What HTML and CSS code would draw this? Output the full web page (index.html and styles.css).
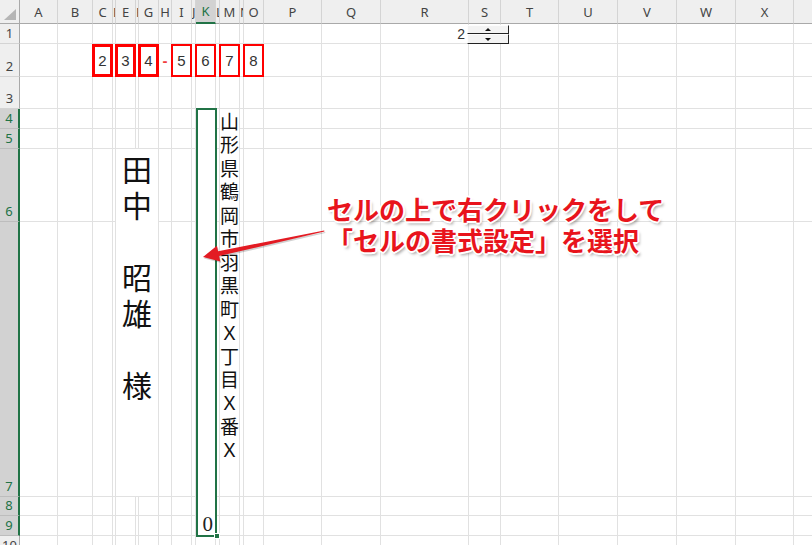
FILE: index.html
```html
<!DOCTYPE html>
<html lang="ja">
<head>
<meta charset="utf-8">
<title>Excel - 宛名</title>
<link rel="stylesheet" href="styles.css">
</head>
<body>
<table class="sheet">
<colgroup>
<col class="w20"><col class="w38"><col class="w35"><col class="w20"><col class="w3"><col class="w20"><col class="w3"><col class="w20"><col class="w13"><col class="w20"><col class="w4"><col class="w20"><col class="w4"><col class="w20"><col class="w4"><col class="w20"><col class="w58"><col class="w59"><col class="w88"><col class="w32"><col class="w58"><col class="w59"><col class="w59"><col class="w59"><col class="w58"><col class="w58">
</colgroup>
<tr class="colhd h24">
<th class="corner"><span class="tri"></span></th><th>A</th><th>B</th><th>C</th><th>D</th><th>E</th><th>F</th><th>G</th><th>H</th><th>I</th><th>J</th><th class="act">K</th><th>L</th><th>M</th><th>N</th><th>O</th><th>P</th><th>Q</th><th>R</th><th>S</th><th>T</th><th>U</th><th>V</th><th>W</th><th>X</th><th>Y</th>
</tr>
<tr class="h20">
<th class="rowhd">1</th><td></td><td></td><td></td><td></td><td></td><td></td><td></td><td></td><td></td><td></td><td></td><td></td><td></td><td></td><td></td><td></td><td></td><td class="num">2</td><td></td><td></td><td></td><td></td><td></td><td></td><td></td>
</tr>
<tr class="h33">
<th class="rowhd">2</th><td></td><td></td><td><div class="box">2</div></td><td></td><td><div class="box">3</div></td><td></td><td><div class="box">4</div></td><td class="dash">-</td><td><div class="box thin">5</div></td><td></td><td><div class="box thin">6</div></td><td></td><td><div class="box thin">7</div></td><td></td><td><div class="box thin">8</div></td><td></td><td></td><td></td><td></td><td></td><td></td><td></td><td></td><td></td><td></td>
</tr>
<tr class="h32">
<th class="rowhd">3</th><td></td><td></td><td></td><td></td><td></td><td></td><td></td><td></td><td></td><td></td><td></td><td></td><td></td><td></td><td></td><td></td><td></td><td></td><td></td><td></td><td></td><td></td><td></td><td></td><td></td>
</tr>
<tr class="h20 sel-row">
<th class="rowhd">4</th><td></td><td></td><td></td><td></td><td></td><td></td><td></td><td></td><td></td><td></td><td class="kcell" rowspan="6">0</td><td></td><td class="addr" rowspan="4"><div class="vaddr">山形県鶴岡市羽黒町Ｘ丁目Ｘ番Ｘ</div></td><td></td><td></td><td></td><td></td><td></td><td></td><td></td><td></td><td></td><td></td><td></td><td></td>
</tr>
<tr class="h20 sel-row">
<th class="rowhd">5</th><td></td><td></td><td></td><td></td><td></td><td></td><td></td><td></td><td></td><td></td><td></td><td></td><td></td><td></td><td></td><td></td><td></td><td></td><td></td><td></td><td></td><td></td><td></td>
</tr>
<tr class="h73 sel-row">
<th class="rowhd">6</th><td></td><td></td><td></td><td></td><td class="name" colspan="3" rowspan="2"><div class="vname">田中　昭雄　様</div></td><td></td><td></td><td></td><td></td><td></td><td></td><td></td><td></td><td></td><td></td><td></td><td></td><td></td><td></td><td></td><td></td>
</tr>
<tr class="h275 sel-row">
<th class="rowhd">7</th><td></td><td></td><td></td><td></td><td></td><td></td><td></td><td></td><td></td><td></td><td></td><td></td><td></td><td></td><td></td><td></td><td></td><td></td><td></td><td></td>
</tr>
<tr class="h19 sel-row">
<th class="rowhd">8</th><td></td><td></td><td></td><td></td><td></td><td></td><td></td><td></td><td></td><td></td><td></td><td></td><td></td><td></td><td></td><td></td><td></td><td></td><td></td><td></td><td></td><td></td><td></td><td></td>
</tr>
<tr class="h20 sel-row">
<th class="rowhd">9</th><td></td><td></td><td></td><td></td><td></td><td></td><td></td><td></td><td></td><td></td><td></td><td></td><td></td><td></td><td></td><td></td><td></td><td></td><td></td><td></td><td></td><td></td><td></td><td></td>
</tr>
<tr class="h20">
<th class="rowhd">10</th><td></td><td></td><td></td><td></td><td></td><td></td><td></td><td></td><td></td><td></td><td></td><td></td><td></td><td></td><td></td><td></td><td></td><td></td><td></td><td></td><td></td><td></td><td></td><td></td><td></td>
</tr>
</table>

<div class="spin">
  <div class="spin-btn up"></div>
  <div class="spin-btn down"></div>
</div>

<svg class="arrow" viewBox="0 0 812 545" width="812" height="545" aria-hidden="true">
  <polygon class="arrow-shadow" points="325.2,232.1 219.1,252.7 217.9,247.3 204,258.5 221.3,262.9 220.1,257.5 325.4,233.1"/>
  <polygon class="arrow-body" points="324.2,230.6 218.1,251.2 216.9,245.8 203,257 220.3,261.4 219.1,256.0 324.4,231.6"/>
</svg>

<div class="note">
  <div>セルの上で右クリックをして</div>
  <div>「セルの書式設定」を選択</div>
</div>
</body>
</html>
```
FILE: styles.css
```css
html, body {
  margin: 0;
  padding: 0;
  overflow: hidden;
  background: #fff;
}
body {
  width: 812px;
  height: 545px;
  position: relative;
  font-family: "Liberation Sans", "Noto Sans CJK JP", sans-serif;
}

/* ---------- sheet grid ---------- */
.sheet {
  border-collapse: separate;
  border-spacing: 0;
  table-layout: fixed;
  width: 852px;
}
.w20 { width: 20px; }
.w38 { width: 38px; }
.w35 { width: 35px; }
.w3 { width: 3px; }
.w4 { width: 4px; }
.w13 { width: 13px; }
.w32 { width: 32px; }
.w58 { width: 58px; }
.w59 { width: 59px; }
.w88 { width: 88px; }

.h24 { height: 24px; }
.h20 { height: 20px; }
.h19 { height: 19px; }
.h33 { height: 33px; }
.h32 { height: 32px; }
.h73 { height: 73px; }
.h275 { height: 275px; }

.sheet td {
  padding: 0;
  border-right: 1px solid #e1e1e1;
  border-bottom: 1px solid #e1e1e1;
  font-size: 14px;
  color: #333;
}
.sheet th {
  padding: 0;
  font-weight: normal;
  font-family: "Noto Sans", "Liberation Sans", sans-serif;
  font-size: 13px;
  color: #444;
  background: #efefef;
  overflow: hidden;
  white-space: nowrap;
}

/* column header */
.colhd th {
  border-right: 1px solid #d4d4d4;
  border-bottom: 1px solid #a9a9a9;
  text-align: center;
  vertical-align: middle;
}
.colhd th.act {
  background: #d2d2d2;
  color: #217346;
  border-bottom: 2px solid #217346;
}
.colhd th.corner {
  position: relative;
  border-right: 1px solid #a9a9a9;
}
.tri {
  position: absolute;
  right: 3px;
  bottom: 3px;
  width: 0;
  height: 0;
  border-left: 12px solid transparent;
  border-bottom: 11px solid #b5b5b5;
}

/* row header */
.sheet .rowhd {
  border-right: 1px solid #a9a9a9;
  border-bottom: 1px solid #d4d4d4;
  text-align: center;
  vertical-align: bottom;
  line-height: 17px;
  padding-bottom: 1px;
}
.sel-row .rowhd {
  background: #d2d2d2;
  color: #217346;
  border-right: 2px solid #217346;
  border-bottom-color: #bdbdbd;
}

/* cells */
.sheet td.num {
  text-align: right;
  padding-right: 3px;
  font-size: 14px;
  color: #333;
}
.box {
  height: 33px;
  margin: 0 -1px -1px;
  box-sizing: border-box;
  border: 3px solid #ff0000;
  display: flex;
  align-items: center;
  justify-content: center;
  font-size: 15px;
  color: #333;
}
.box.thin {
  border-width: 2px;
}
.sheet td.dash {
  text-align: center;
  color: #f03c3c;
  font-size: 15px;
  font-weight: bold;
}

.sheet td.name {
  vertical-align: top;
}
.vname {
  writing-mode: vertical-rl;
  font-family: "Noto Sans CJK JP", sans-serif;
  font-size: 30px;
  line-height: 30px;
  width: 30px;
  height: 260px;
  letter-spacing: 6px;
  margin: 6px auto 0;
  color: #111;
}

.sheet td.addr {
  vertical-align: top;
}
.vaddr {
  writing-mode: vertical-rl;
  font-family: "Noto Sans CJK JP", sans-serif;
  font-size: 19px;
  line-height: 19px;
  width: 19px;
  height: 370px;
  letter-spacing: 4.5px;
  margin: 3px 0 0;
  color: #111;
}

.sheet td.kcell {
  position: relative;
  vertical-align: bottom;
  text-align: right;
  padding-right: 2px;
  font-family: "Liberation Serif", serif;
  font-size: 21px;
  line-height: 21px;
  color: #222;
}
.kcell::before {
  content: "";
  position: absolute;
  left: 0;
  top: -1px;
  right: -2px;
  bottom: -2px;
  border: 2px solid #217346;
}
.kcell::after {
  content: "";
  position: absolute;
  right: -5px;
  bottom: -4px;
  width: 4px;
  height: 4px;
  background: #217346;
  border: 1px solid #fff;
}

/* ---------- spin button control ---------- */
.spin {
  position: absolute;
  left: 467px;
  top: 25px;
  width: 42px;
}
.spin-btn {
  box-sizing: border-box;
  height: 9px;
  background: #f3f3f3;
  border-top: 1px solid #fdfdfd;
  border-left: 1px solid #fdfdfd;
  border-right: 1px solid #222;
  border-bottom: 1px solid #222;
  display: flex;
  align-items: center;
  justify-content: center;
}
.spin-btn.down {
  height: 10px;
}
.up::before {
  content: "";
  border-left: 3px solid transparent;
  border-right: 3px solid transparent;
  border-bottom: 3px solid #111;
}
.down::before {
  content: "";
  border-left: 3px solid transparent;
  border-right: 3px solid transparent;
  border-top: 3px solid #111;
}

/* ---------- callout ---------- */
.arrow {
  position: absolute;
  left: 0;
  top: 0;
}
.arrow-body {
  fill: #e31b23;
}
.arrow-shadow {
  fill: rgba(0, 0, 0, 0.18);
}
.note {
  position: absolute;
  left: 327px;
  top: 193px;
  font-family: "Noto Sans CJK JP", sans-serif;
  font-size: 26px;
  line-height: 31px;
  font-weight: 700;
  color: #e8141c;
  white-space: nowrap;
  text-shadow:
    -1px -1px 0 #fff, 1px -1px 0 #fff, -1px 1px 0 #fff, 1px 1px 0 #fff,
    0 -2px 0 #fff, 0 2px 0 #fff, -2px 0 0 #fff, 2px 0 0 #fff,
    2px 3px 3px rgba(0, 0, 0, 0.35);
}
```
